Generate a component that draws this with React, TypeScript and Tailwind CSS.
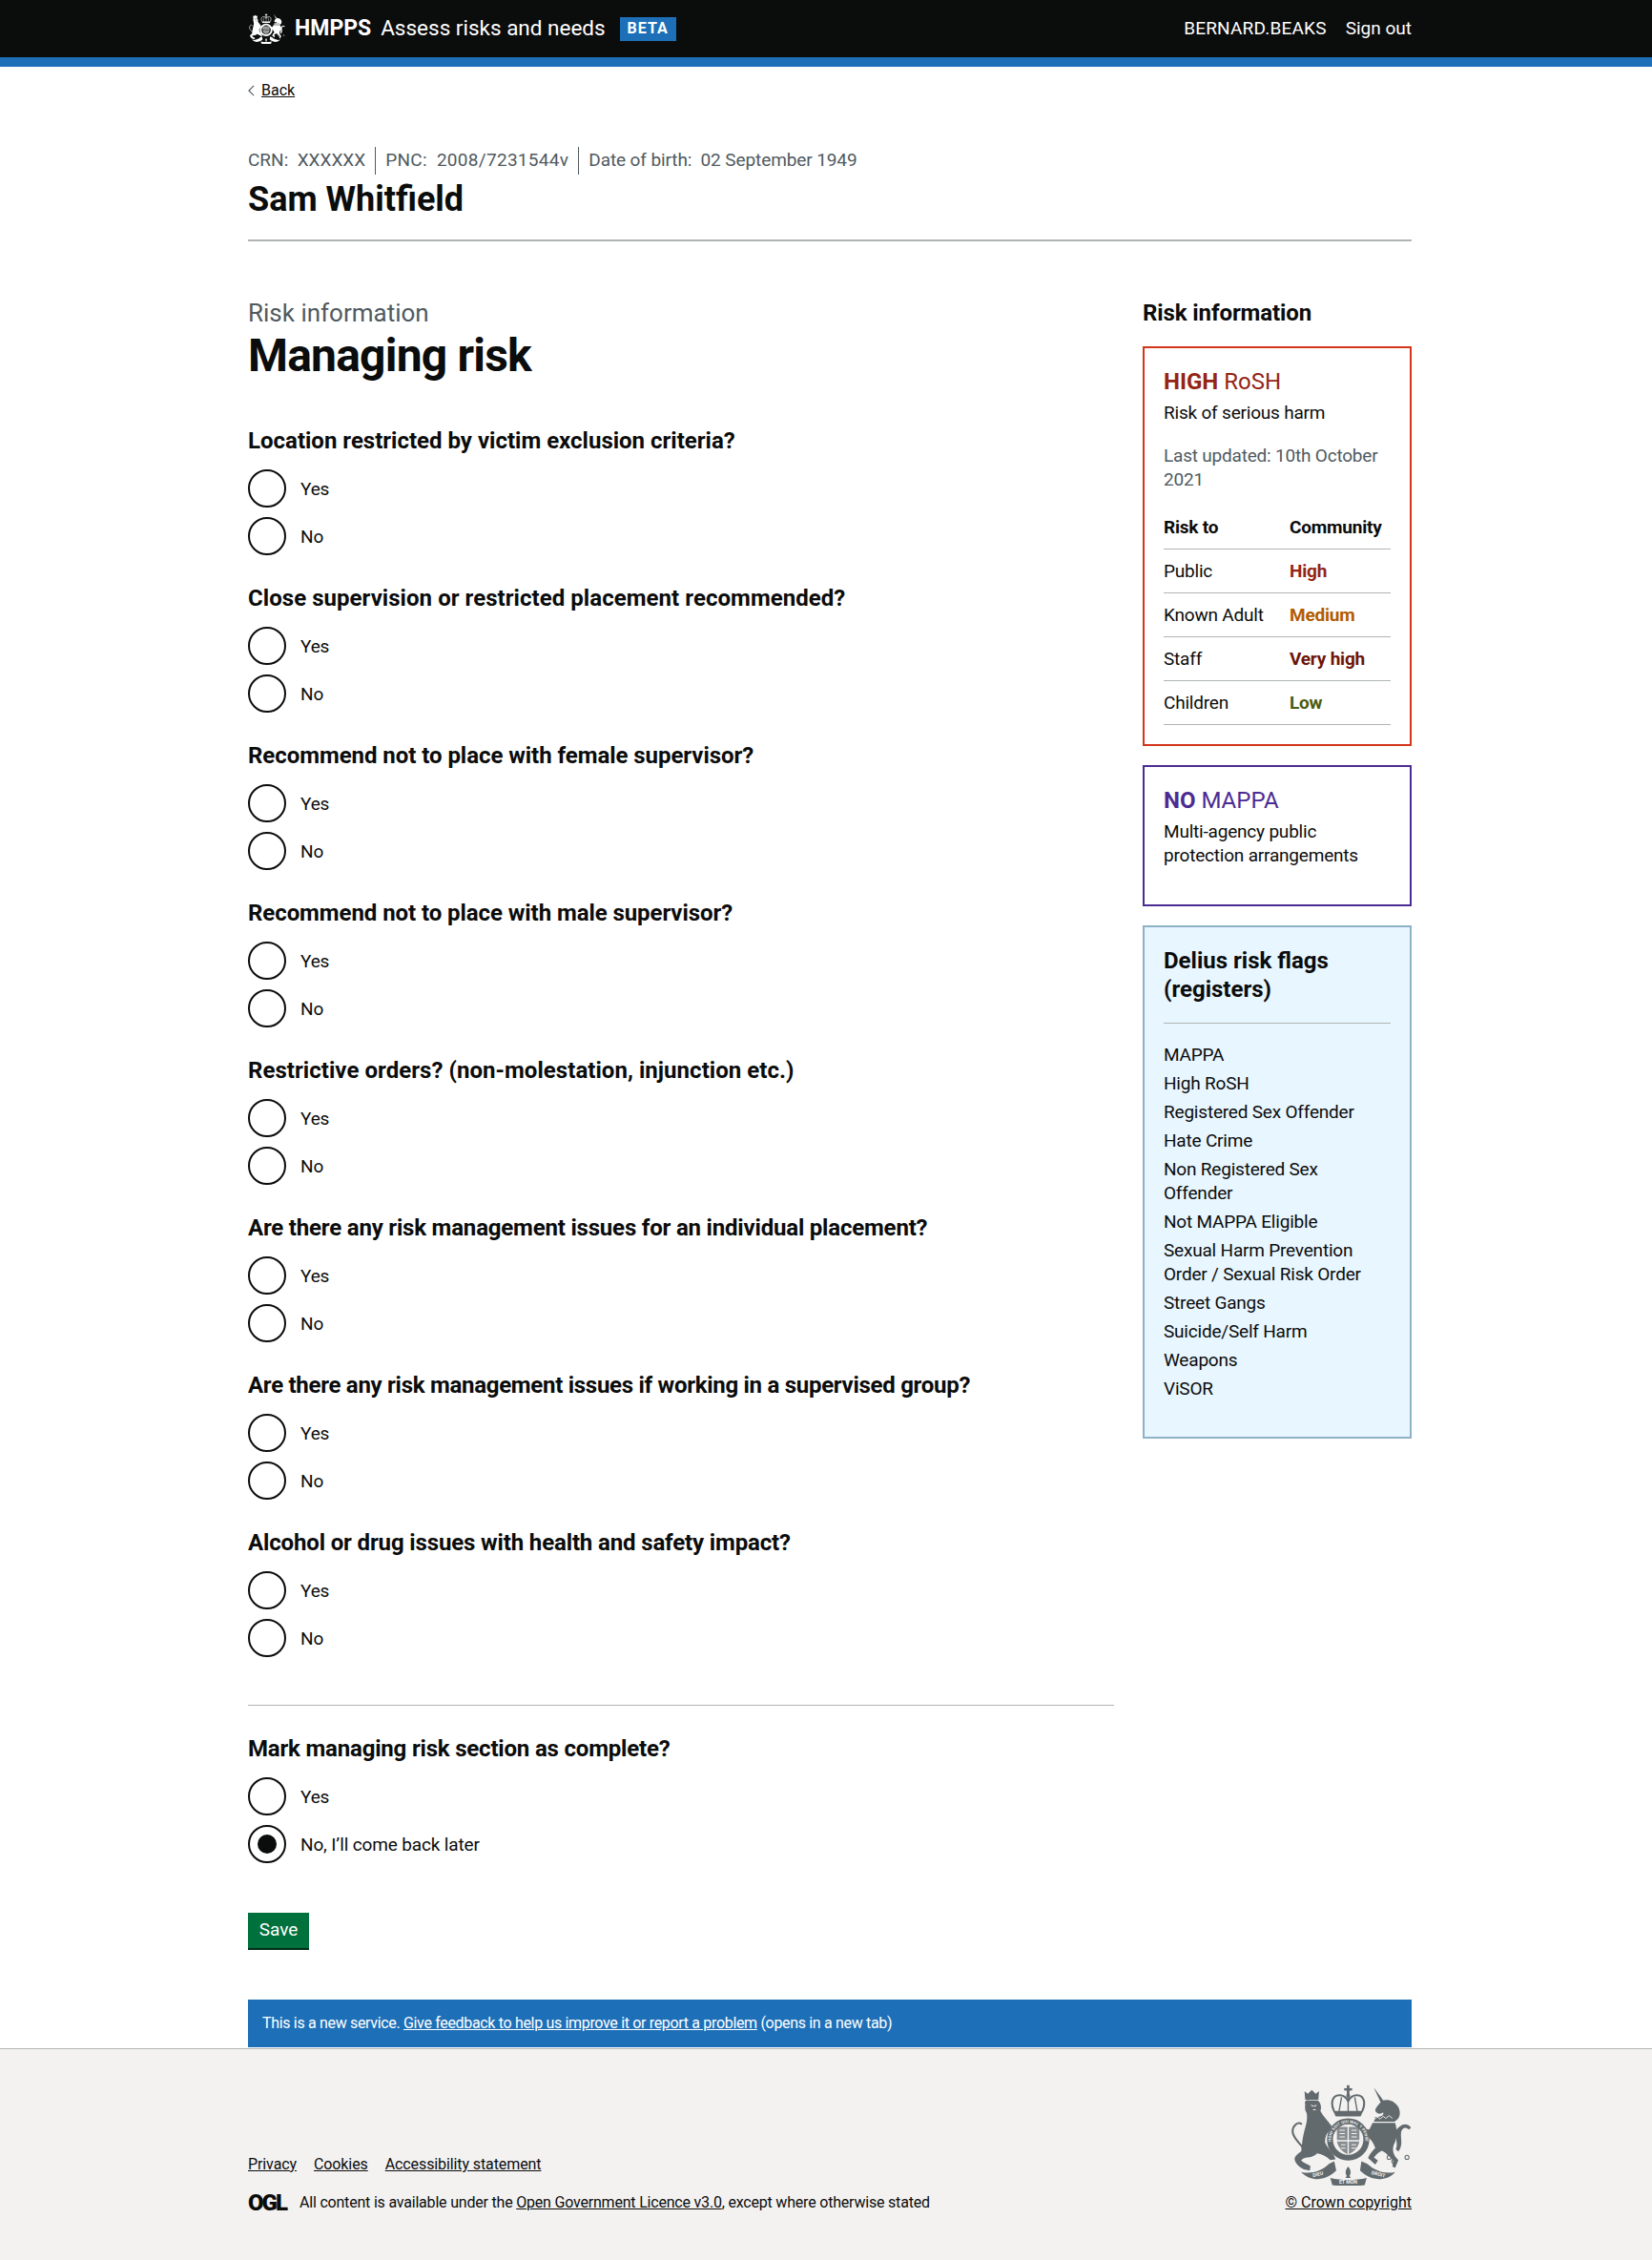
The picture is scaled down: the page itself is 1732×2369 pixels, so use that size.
const questions = [
  { title: 'Location restricted by victim exclusion criteria?', fit: 'tracking-normal' },
  { title: 'Close supervision or restricted placement recommended?', fit: 'tracking-[0.05px]' },
  { title: 'Recommend not to place with female supervisor?', fit: 'tracking-[-0.05px]' },
  { title: 'Recommend not to place with male supervisor?', fit: 'tracking-[-0.07px]' },
  { title: 'Restrictive orders? (non-molestation, injunction etc.)', fit: 'tracking-[0.05px]' },
  { title: 'Are there any risk management issues for an individual placement?', fit: 'tracking-[-0.19px]' },
  { title: 'Are there any risk management issues if working in a supervised group?', fit: 'tracking-[-0.28px]' },
  { title: 'Alcohol or drug issues with health and safety impact?', fit: 'tracking-[-0.14px]' },
];

const riskRows = [
  { label: 'Public', value: 'High', color: 'text-[#942514]' },
  { label: 'Known Adult', value: 'Medium', color: 'text-[#b35c00]' },
  { label: 'Staff', value: 'Very high', color: 'text-[#6e1509]' },
  { label: 'Children', value: 'Low', color: 'text-[#4b5b0f]' },
];

const flags = [
  'MAPPA',
  'High RoSH',
  'Registered Sex Offender',
  'Hate Crime',
  'Non Registered Sex Offender',
  'Not MAPPA Eligible',
  'Sexual Harm Prevention Order / Sexual Risk Order',
  'Street Gangs',
  'Suicide/Self Harm',
  'Weapons',
  'ViSOR',
];

// Royal arms, drawn in the same coordinates as the footer crop
const Crest = ({ className, bg, motto = false }: { className: string; bg: string; motto?: boolean }) => (
  <svg viewBox="155 80 375 305" className={className} fill="currentColor">
    {/* crown */}
    <rect x="334" y="82" width="8" height="28" />
    <rect x="326" y="91" width="24" height="7" />
    <circle cx="338" cy="114" r="6" />
    <path d="M300 168C282 140 288 112 312 112c13 0 22 10 26 18 4-8 13-18 26-18 24 0 30 28 12 56" fill="none" stroke="currentColor" strokeWidth="6" />
    <path d="M338 114v50M318 118l-8 46M358 118l8 46" fill="none" stroke="currentColor" strokeWidth="4" />
    <rect x="298" y="160" width="80" height="16" rx="4" />
    {/* garter and shield */}
    <circle cx="338" cy="246" r="55" fill="none" stroke="currentColor" strokeWidth="18" />
    <path d="M304 208h32v40h-32zM340 208h32v40h-32zM304 252h32v38c-16-6-28-20-32-38zM340 252h32c-4 18-16 32-32 38z" opacity="0.75" />
    <path d="M312 218h16M312 228h16M312 238h16M348 218h16M348 228h16M348 238h16M316 262h14M316 272h14M348 262h14M348 272h14" stroke={bg} strokeWidth="3" fill="none" />
    {/* lion */}
    <path d="M208 126l-2-26 10 8 12-12 12 12 10-8-2 26z" />
    <path d="M208 140c-3-12 4-14 14-12h24c10 7 12 22 8 32 8 15 22 30 34 45l-8 17c-8 6-12 18-12 33 6 15 20 27 28 41l4 10-16 2c-12-12-26-18-40-20-6 8-18 12-30 12-10 2-16 4-18 10 8 8 18 10 28 16l-2 14-18-4c-14-6-26-18-28-30 0-10 10-18 20-24 2-20 4-42 10-64 6-18 10-38 6-53-6-10-4-19-4-25z" />
    <path d="M226 142l8 4M242 142l-6 4M232 156h8" stroke={bg} strokeWidth="3" fill="none" />
    <path d="M200 270c-10-15-30-30-30-48 0-17 15-32 28-22" fill="none" stroke="currentColor" strokeWidth="6" />
    {/* unicorn */}
    <path d="M415 88l31 42-9 5z" />
    <path d="M440 130c15-8 38-2 50 18 8 17 6 34-12 44h-62l4-14c20 0 26-6 24-14-8 6-18 6-24-4 0-10 10-20 20-30z" />
    <path d="M412 196h68c8 24 6 50-4 66-6 18 0 34 14 46l-10 24-8-4 2-18c-12-14-24-26-34-30-10 4-18 12-24 20l12 10-8 12-22-20c6-14 14-22 22-30-4-14-12-26-24-34l-12-6 4-18 14 2z" />
    <path d="M416 186l10-8 8 6 10-8 8 6 10-8 10 8" stroke={bg} strokeWidth="2.5" fill="none" />
    <path d="M482 220c10-15 30-30 46-10l-6 6c-12-11-22-4-24 9-2 20 7 37-8 57l-8-6c8-16-2-36 0-56z" />
    <circle cx="462" cy="300" r="6" fill="none" stroke="currentColor" strokeWidth="3" />
    <circle cx="476" cy="312" r="6" fill="none" stroke="currentColor" strokeWidth="3" />
    <circle cx="516" cy="300" r="6" fill="none" stroke="currentColor" strokeWidth="3" />
    {/* motto ribbon */}
    <path d="M196 344c29 8 62-2 84-24l16-8 6 28c-12 12-30 24-56 26-18 0-38-8-50-22zM480 344c-28 8-60-2-84-24l-18-8-4 28c12 12 30 24 56 26 20 0 40-8 50-22zM284 362c34 8 74 8 110 0l-6 22c-32 4-68 4-98 0z" />
    <path d="M338 328c8 10 10 20 4 28l4 6h-16l4-6c-6-8-4-18 4-28z" />
    {motto && (
      <g fill={bg} fontSize="15" fontWeight="700" fontFamily="Roboto, sans-serif" textAnchor="middle">
        <path id="garter" d="M292 272A52 52 0 1 1 384 272" fill="none" />
        <text fontSize="12" letterSpacing="0.5">
          <textPath href="#garter" startOffset="50%">HONI SOIT QUI MAL Y PENSE</textPath>
        </text>
        <text x="248" y="356" transform="rotate(-14 248 356)">DIEU</text>
        <text x="428" y="356" transform="rotate(14 428 356)">DROIT</text>
        <text x="338" y="381">ET MON</text>
      </g>
    )}
  </svg>
);

const Radio = ({ label, checked = false }: { label: string; checked?: boolean }) => (
  <div className="flex items-center h-[40px]">
    <span className="flex items-center justify-center w-[40px] h-[40px] rounded-full border-2 border-[#0b0c0c] bg-white shrink-0">
      {checked && <span className="block w-[20px] h-[20px] rounded-full bg-[#0b0c0c]" />}
    </span>
    <span className="ml-[15px] text-[19px] leading-[25px] tracking-[-0.15px] text-[#0b0c0c]">{label}</span>
  </div>
);

const Question = ({ title, fit, no = 'No', checkedNo = false }: { title: string; fit: string; no?: string; checkedNo?: boolean }) => (
  <div className="mb-[30px]">
    <h2 className={`text-[24px] leading-[30px] font-bold mb-[15px] ${fit}`}>{title}</h2>
    <div className="flex flex-col gap-[10px]">
      <Radio label="Yes" />
      <Radio label={no} checked={checkedNo} />
    </div>
  </div>
);

export default function App() {
  return (
    <div className="min-h-[2369px] flex flex-col bg-white text-[#0b0c0c] font-['Roboto',sans-serif]">
      <header className="h-[70px] bg-[#0b0c0c] border-b-[10px] border-[#1d70b8] text-white">
        <div className="ml-[260px] w-[1220px] h-full flex items-center">
          <Crest className="w-[39px] h-[32px] text-white" bg="#0b0c0c" />
          <span className="ml-[10px] text-[23px] font-bold">HMPPS</span>
          <span className="ml-[10px] text-[22.5px]">Assess risks and needs</span>
          <span className="ml-[15px] w-[59px] h-[25px] bg-[#1d70b8] flex items-center justify-center text-[16px] font-bold tracking-[1px]">BETA</span>
          <span className="ml-auto text-[19px] tracking-[0.2px]">BERNARD.BEAKS</span>
          <span className="ml-[20px] text-[19px]">Sign out</span>
        </div>
      </header>

      <main className="ml-[260px] w-[1220px] flex-1">
        <div className="mt-[15px] flex items-center h-[20px] text-[16px]">
          <svg viewBox="0 0 8 14" className="w-[7px] h-[12px] mr-[7px]" fill="none" stroke="#505a5f" strokeWidth="1.3">
            <path d="M7 1L1 7l6 6" />
          </svg>
          <span className="underline">Back</span>
        </div>

        <div className="mt-[51px] flex items-center h-[25px] text-[19px] text-[#505a5f]">
          <span className="pr-[10px] border-r border-[#505a5f]">CRN:&nbsp; XXXXXX</span>
          <span className="px-[10px] border-r border-[#505a5f] tracking-[0.3px]">PNC:&nbsp; 2008/7231544v</span>
          <span className="pl-[10px] tracking-[-0.1px]">Date of birth:&nbsp; 02 September 1949</span>
        </div>
        <h1 className="mt-[6px] text-[36px] leading-[45px] font-bold pb-[19px] border-b-2 border-[#b1b4b6]">Sam Whitfield</h1>

        <div className="mt-[60px] flex justify-between">
          <div className="w-[908px]">
            <div className="text-[26px] leading-[30px] text-[#505a5f]">Risk information</div>
            <h1 className="mt-[5px] text-[48px] leading-[50px] tracking-[-0.8px] font-bold mb-[49px]">Managing risk</h1>
            {questions.map((q) => (
              <Question key={q.title} title={q.title} fit={q.fit} />
            ))}
            <hr className="border-t border-[#b1b4b6] mt-[50px] mb-[30px]" />
            <Question title="Mark managing risk section as complete?" fit="tracking-[-0.19px]" no="No, I’ll come back later" checkedNo />
            <button className="mt-[22px] h-[37px] w-[64px] bg-[#00703c] text-white text-[19px] shadow-[0_2px_0_#002d18]">Save</button>
          </div>

          <aside className="w-[282px]">
            <h2 className="text-[24px] leading-[30px] tracking-[-0.1px] font-bold mb-[20px]">Risk information</h2>
            <div className="border-2 border-[#d4351c] p-[20px] mb-[20px]">
              <div className="text-[24px] leading-[30px] text-[#942514]"><b>HIGH</b> RoSH</div>
              <p className="mt-[5px] text-[19px] leading-[25px] tracking-[-0.2px]">Risk of serious harm</p>
              <p className="mt-[20px] text-[19px] leading-[25px] tracking-[-0.2px] text-[#505a5f]">Last updated: 10th October 2021</p>
              <div className="mt-[15px] text-[19px] leading-[25px] tracking-[-0.2px]">
                <div className="flex h-[46px] items-center border-b border-[#b1b4b6] font-bold">
                  <span className="w-[132px]">Risk to</span>
                  <span>Community</span>
                </div>
                {riskRows.map((r) => (
                  <div key={r.label} className="flex h-[46px] items-center border-b border-[#b1b4b6]">
                    <span className="w-[132px]">{r.label}</span>
                    <span className={`font-bold ${r.color}`}>{r.value}</span>
                  </div>
                ))}
              </div>
            </div>
            <div className="border-2 border-[#4c2c92] p-[20px] pb-[39px] mb-[20px]">
              <div className="text-[24px] leading-[30px] text-[#4c2c92]"><b>NO</b> MAPPA</div>
              <p className="mt-[5px] text-[19px] leading-[25px] tracking-[-0.2px]">Multi-agency public protection arrangements</p>
            </div>
            <div className="border-2 border-[#8fb1c8] bg-[#e8f6ff] p-[20px] pb-[38px]">
              <h2 className="text-[24px] leading-[30px] font-bold pb-[20px] border-b border-[#b1b4b6] mb-[20px]">Delius risk flags (registers)</h2>
              <ul className="flex flex-col gap-[5px] text-[19px] leading-[25px] tracking-[-0.2px]">
                {flags.map((f) => (
                  <li key={f}>{f}</li>
                ))}
              </ul>
            </div>
          </aside>
        </div>

        <div className="mt-[54px] h-[50px] bg-[#1d70b8] text-white text-[16px] tracking-[-0.33px] flex items-center px-[15px]">
          <span>This is a new service.&nbsp;</span>
          <span className="underline">Give feedback to help us improve it or report a problem</span>
          <span>&nbsp;(opens in a new tab)</span>
        </div>
      </main>

      <footer className="h-[222px] bg-[#f3f2f1] border-t border-[#b1b4b6] text-[16px]">
        <div className="ml-[260px] w-[1220px] h-full flex justify-between">
          <div className="pt-[109px]">
            <div className="flex gap-[18px] underline tracking-[-0.1px]">
              <span>Privacy</span>
              <span>Cookies</span>
              <span>Accessibility statement</span>
            </div>
            <div className="mt-[16px] flex items-center tracking-[-0.2px]">
              <span className="w-[41px] mr-[13px] text-[24px] leading-[20px] font-black tracking-[-2px]">OGL</span>
              <span>All content is available under the <span className="underline">Open Government Licence v3.0</span>, except where otherwise stated</span>
            </div>
          </div>
          <div className="pt-[37px] flex flex-col items-end">
            <Crest className="w-[130px] h-[106px] text-[#626a6e]" bg="#f3f2f1" motto />
            <span className="mt-[6px] underline">© Crown copyright</span>
          </div>
        </div>
      </footer>
    </div>
  );
}
